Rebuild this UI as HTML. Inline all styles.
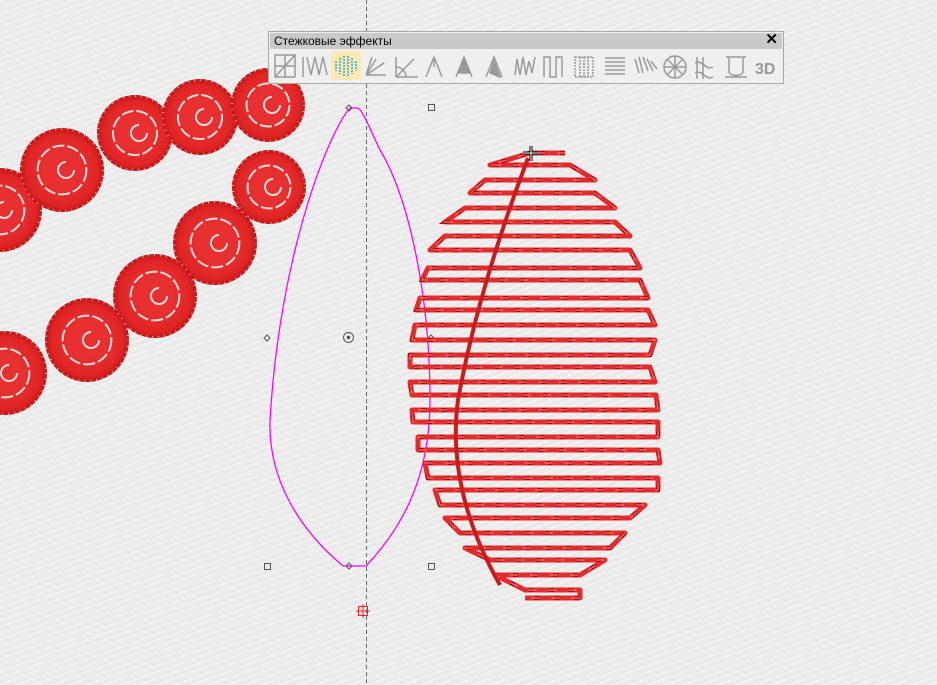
<!DOCTYPE html>
<html><head><meta charset="utf-8"><style>
html,body{margin:0;padding:0;width:937px;height:685px;overflow:hidden}
body{background:#ebebeb;background-image:repeating-linear-gradient(160deg,rgba(255,255,255,.35) 0 2px,rgba(0,0,0,0) 2px 5px,rgba(0,0,0,.02) 5px 6px);font-family:"Liberation Sans",sans-serif;position:relative}
#tb{position:absolute;left:268px;top:31px;width:514px;height:51px;background:#efefef;border:1px solid #a8a8a8}
#tt{height:16px;background:#c9c9c9;margin:1px 1px 0 1px;font-size:12px;line-height:16px;padding-left:4px;color:#000;position:relative}
#tt b{position:absolute;right:4px;top:-1px;font-size:15px;font-weight:bold}
svg{position:absolute;left:0;top:0}
</style></head><body>
<svg width="937" height="685" id="s">
<defs>
<radialGradient id="rg"><stop offset="0.45" stop-color="#e83030"/><stop offset="0.85" stop-color="#e02424"/><stop offset="1" stop-color="#c01616"/></radialGradient>
</defs>
<g id="circ"></g>
<line x1="366.5" y1="0" x2="366.5" y2="685" stroke="#666" stroke-dasharray="4,3" stroke-width="1"/>
<path d="M350,108 C330,130 280,250 270,420 C268,480 300,530 343,566 L366,566 C400,530 430,480 430,400 C430,300 410,200 380,150 C368,125 362,108 357,108 Z" fill="none" stroke="#ff00ff" stroke-width="1.3"/>
<g fill="none" stroke="#555" stroke-width="1">
<rect x="428.5" y="104.5" width="6" height="6"/><rect x="264.5" y="563.5" width="6" height="6"/><rect x="428.5" y="563.5" width="6" height="6"/>
<path d="M349,105 l3,3 -3,3 -3,-3z M267,335 l3,3 -3,3 -3,-3z M431,335 l3,3 -3,3 -3,-3z M349,563 l3,3 -3,3 -3,-3z"/>
<circle cx="348.5" cy="337.5" r="5"/><circle cx="348.5" cy="337.5" r="1.2" fill="#333"/>
</g>
<rect x="358.5" y="606.5" width="9" height="9" fill="none" stroke="#e22" stroke-width="1"/>
<line x1="356" y1="611" x2="370" y2="611" stroke="#e22"/><line x1="363" y1="604" x2="363" y2="618" stroke="#e22"/>
<g id="zig"></g>
<path d="M528,158 Q478,290 458,400 Q446,490 500,585" fill="none" stroke="#c81c1c" stroke-width="4"/>
<path d="M523,153 h16 M531,146 v15" stroke="#000" stroke-width="3"/><path d="M523,153 h16 M531,146 v15" stroke="#fff" stroke-width="1"/>
</svg>
<div id="tb"><div id="tt">Стежковые эффекты<b>✕</b></div>
<svg width="514" height="34" style="top:17px">
<rect x="62" y="2" width="30" height="29" fill="#fde9b4"/>
<g fill="none" stroke="#9a9a9a" stroke-width="1.5">
<path d="M6,6h20v22h-20z M6,17h20 M16,6v22 M6,28L26,6"/>
<path d="M34,8v20 M38,8l4,18 4,-18 4,18 4,-18 4,18" />
<g stroke="#2ab0e0"><path d="M67,12v10 M71,9v16 M75,7v20 M79,7v20 M83,9v16 M87,12v10" stroke-dasharray="2,1"/></g>
<path d="M97,26l10,-16 M97,26l18,-12 M97,26l20,0 M97,26l6,-18"/>
<path d="M127,28h22 M127,28l18,-18 M127,28v-20 M127,18a10,10 0 0,1 10,10"/>
<path d="M157,28l8,-20 8,20 M165,8v10"/>
<path d="M187,28l8,-20 8,20"/><path d="M189,24l6,-12 6,12z" fill="#9a9a9a"/>
<path d="M217,28l8,-20 8,20"/><path d="M221,24l4,-12 6,16z" fill="#9a9a9a"/>
<path d="M246,26l2,-16 3,16 3,-18 3,18 3,-14 3,12 3,-16"/>
<path d="M275,28v-20h6v20h6v-20h6v20"/>
<path d="M306,8h18v20h-18z M311,8v20 M315,8v20 M319,8v20" stroke-dasharray="2,1"/>
<path d="M336,9h20 M336,13h20 M336,17h20 M336,21h20 M336,25h20"/>
<path d="M366,10l4,14 M370,8l4,16 M374,8l5,14 M378,10l6,12 M382,12l6,8"/>
<circle cx="406" cy="18" r="11"/><path d="M406,7v22 M395,18h22 M398,10l16,16 M414,10l-16,16"/>
<path d="M428,8v22 M434,8v22 M426,14c8,-4 10,8 18,4 M426,24c8,-4 10,8 18,4"/>
<path d="M457,8h20 M460,8v14c0,6 14,6 14,0v-14 M456,28h22"/>
</g>
<text x="486" y="25" font-family="Liberation Sans" font-weight="bold" font-size="16" fill="#9a9a9a">3D</text>
</svg></div>
<script>
var c=document.getElementById('circ');
var C=[[0,210,42],[62,170,42],[135,133,38],[200,117,38],[268,105,37],[269,187,37],[215,243,42],[155,296,42],[87,340,42],[5,373,42]];
C.forEach(function(p){var g='<circle cx="'+p[0]+'" cy="'+p[1]+'" r="'+p[2]+'" fill="url(#rg)"/>';
g+='<circle cx="'+p[0]+'" cy="'+p[1]+'" r="'+(p[2]*0.58)+'" fill="none" stroke="#f2dede" stroke-width="2" stroke-dasharray="12,3"/>';
g+='<path d="M'+(p[0]+4)+','+(p[1]-8)+' a8,8 0 1,0 8,8" fill="none" stroke="#f2dede" stroke-width="2"/>';
g+='<circle cx="'+p[0]+'" cy="'+p[1]+'" r="'+(p[2]-1)+'" fill="none" stroke="#fff" stroke-opacity=".6" stroke-width="2" stroke-dasharray="1,5"/>';
c.insertAdjacentHTML('beforeend',g);});
var R=[[153,530,565],[165,490,570],[180,485,595],[193,470,595],[208,465,615],[222,445,615],[236,445,630],[250,430,630],[268,428,640],[280,422,640],[298,420,648],[310,416,648],[325,415,655],[340,412,655],[355,410,650],[367,410,650],[382,410,655],[395,412,656],[410,412,658],[422,413,658],[437,418,658],[450,418,658],[463,425,660],[478,428,658],[490,435,658],[505,440,645],[518,445,630],[533,460,625],[548,465,610],[560,490,605],[575,495,580],[590,525,580],[598,525,580]];
var pts=[];R.forEach(function(r,i){if(i%2==0){pts.push(r[2]+','+r[0]);pts.push(r[1]+','+r[0]);}else{pts.push(r[1]+','+r[0]);pts.push(r[2]+','+r[0]);}});
var z=document.getElementById('zig');
z.innerHTML='<polyline points="'+pts.join(' ')+'" fill="none" stroke="#e22c2c" stroke-width="5" stroke-linejoin="round"/><polyline points="'+pts.join(' ')+'" fill="none" stroke="#a80f0f" stroke-width="4" stroke-dasharray="5,15"/><polyline points="'+pts.join(' ')+'" fill="none" stroke="#f56060" stroke-width="1.5" stroke-dasharray="8,12"/>';
</script>
</body></html>
